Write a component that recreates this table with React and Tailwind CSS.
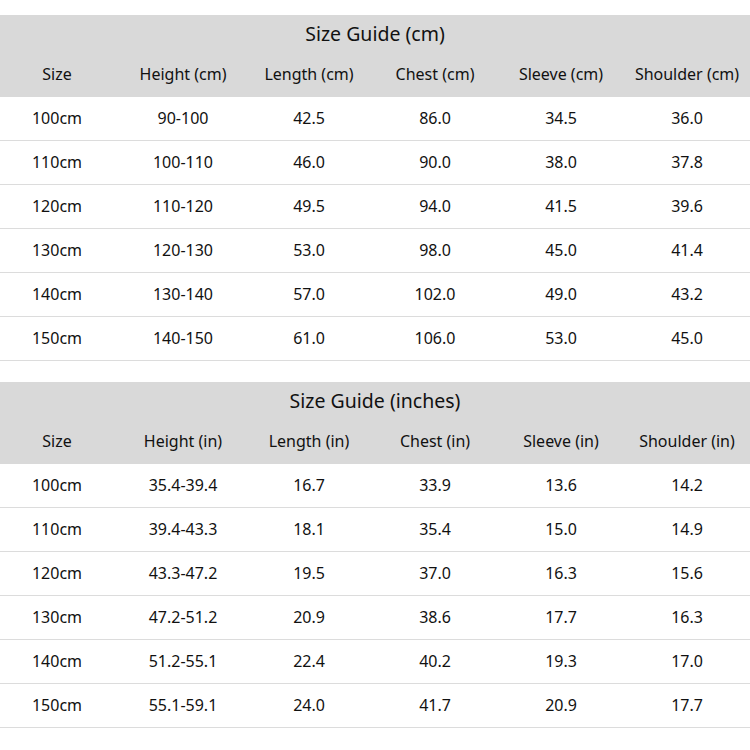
const cmRows = [
  ["100cm", "90-100", "42.5", "86.0", "34.5", "36.0"],
  ["110cm", "100-110", "46.0", "90.0", "38.0", "37.8"],
  ["120cm", "110-120", "49.5", "94.0", "41.5", "39.6"],
  ["130cm", "120-130", "53.0", "98.0", "45.0", "41.4"],
  ["140cm", "130-140", "57.0", "102.0", "49.0", "43.2"],
  ["150cm", "140-150", "61.0", "106.0", "53.0", "45.0"],
];

const inRows = [
  ["100cm", "35.4-39.4", "16.7", "33.9", "13.6", "14.2"],
  ["110cm", "39.4-43.3", "18.1", "35.4", "15.0", "14.9"],
  ["120cm", "43.3-47.2", "19.5", "37.0", "16.3", "15.6"],
  ["130cm", "47.2-51.2", "20.9", "38.6", "17.7", "16.3"],
  ["140cm", "51.2-55.1", "22.4", "40.2", "19.3", "17.0"],
  ["150cm", "55.1-59.1", "24.0", "41.7", "20.9", "17.7"],
];

function SizeTable({ title, unit, rows }) {
  const headers = ["Size", `Height (${unit})`, `Length (${unit})`, `Chest (${unit})`, `Sleeve (${unit})`, `Shoulder (${unit})`];
  return (
    <div className="w-full">
      <div className="bg-[#d9d9d9]">
        <div className="h-[37px] flex items-center justify-center text-[19.5px] pt-[1px]">{title}</div>
        <div className="h-[45px] grid grid-cols-[repeat(6,126px)] -ml-[6px] items-center text-[16px] pb-[2px]">
          {headers.map((h) => (
            <div key={h} className="text-center whitespace-nowrap">{h}</div>
          ))}
        </div>
      </div>
      {rows.map((row) => (
        <div key={row[0]} className="h-[44px] border-b border-[#dcdcdc]">
          <div className="h-full grid grid-cols-[repeat(6,126px)] -ml-[6px] items-center text-[16px] pb-[1px]">
            {row.map((cell, i) => (
              <div key={i} className="text-center">{cell}</div>
            ))}
          </div>
        </div>
      ))}
    </div>
  );
}

export default function App() {
  return (
    <div className="w-[750px] h-[750px] bg-white pt-[15px] text-[#111] overflow-hidden" style={{ fontFamily: '"Noto Sans", sans-serif' }}>
      <SizeTable title="Size Guide (cm)" unit="cm" rows={cmRows} />
      <div className="mt-[21px]">
        <SizeTable title="Size Guide (inches)" unit="in" rows={inRows} />
      </div>
    </div>
  );
}
